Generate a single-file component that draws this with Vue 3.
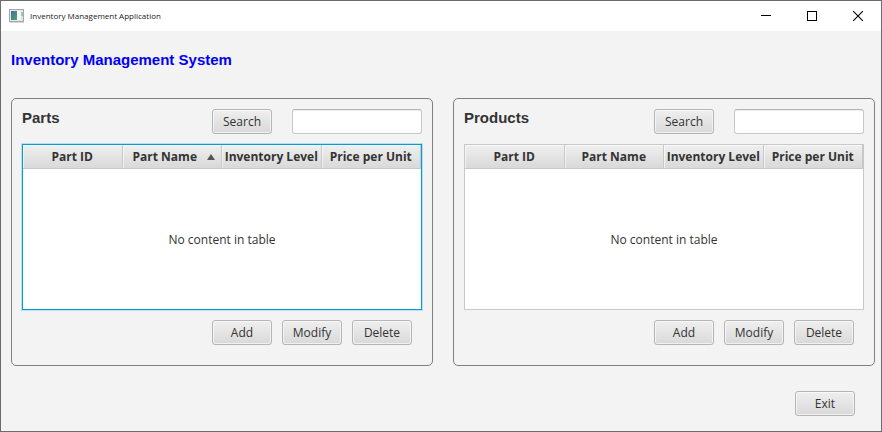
<script setup>
import { ref } from 'vue'

const columns = ['Part ID', 'Part Name', 'Inventory Level', 'Price per Unit']
const panels = ref([
  { id: 'parts', title: 'Parts', focused: true, sorted: 'Part Name', query: '' },
  { id: 'products', title: 'Products', focused: false, sorted: null, query: '' },
])
</script>

<template>
  <div class="window">
    <header class="titlebar">
      <svg class="app-icon" width="16" height="14" viewBox="0 0 16 14" aria-hidden="true">
        <defs>
          <linearGradient id="pane" x1="0" y1="0" x2="1" y2="1">
            <stop offset="0" stop-color="#3f6fa0" />
            <stop offset="1" stop-color="#4aa567" />
          </linearGradient>
        </defs>
        <rect x="0.5" y="0.5" width="14" height="12" fill="#e4e8ec" stroke="#a4a8ad" />
        <path d="M1 13.5H15" stroke="#d3d5d7" />
        <rect x="2" y="2" width="6" height="9" fill="url(#pane)" />
        <rect x="8" y="2" width="4" height="9" fill="#f6f8f8" />
        <rect x="12" y="3" width="2" height="4" fill="#9fc4b4" />
        <rect x="12" y="7" width="2" height="4" fill="#d8e3dc" />
      </svg>
      <span class="caption">Inventory Management Application</span>
      <div class="window-controls">
        <button type="button" aria-label="Minimize">
          <svg width="10" height="10" viewBox="0 0 10 10"><path d="M0 4.5H10" stroke="#000" /></svg>
        </button>
        <button type="button" aria-label="Maximize">
          <svg width="10" height="10" viewBox="0 0 10 10"><rect x="0.5" y="0.5" width="9" height="9" fill="none" stroke="#000" /></svg>
        </button>
        <button type="button" aria-label="Close">
          <svg width="10" height="10" viewBox="0 0 10 10"><path d="M0 0L10 10M10 0L0 10" stroke="#000" stroke-width="1.1" /></svg>
        </button>
      </div>
    </header>

    <main class="content">
      <h1>Inventory Management System</h1>

      <div class="panels">
        <section v-for="panel in panels" :key="panel.id" class="panel">
          <form class="search" @submit.prevent>
            <h2>{{ panel.title }}</h2>
            <button type="submit" class="btn">Search</button>
            <input v-model="panel.query" type="text" class="field" :aria-label="'Search ' + panel.title" />
          </form>

          <table class="grid" :class="{ focused: panel.focused }">
            <thead>
              <tr>
                <th v-for="column in columns" :key="column" scope="col">
                  <div class="heading">
                    <span class="label">{{ column }}</span>
                    <span v-if="panel.sorted === column" class="sort">
                      <svg width="8" height="6" viewBox="0 0 8 6" aria-hidden="true"><path d="M4 0L8 6H0Z" fill="#555" /></svg>
                    </span>
                  </div>
                </th>
              </tr>
            </thead>
            <tbody>
              <tr>
                <td :colspan="columns.length">No content in table</td>
              </tr>
            </tbody>
          </table>

          <div class="actions">
            <button type="button" class="btn">Add</button>
            <button type="button" class="btn">Modify</button>
            <button type="button" class="btn">Delete</button>
          </div>
        </section>
      </div>

      <footer class="footer">
        <button type="button" class="btn">Exit</button>
      </footer>
    </main>
  </div>
</template>

<style>
body {
  background: #f3f3f3;
}
</style>

<style scoped>
.window,
.window * {
  box-sizing: border-box;
}

.window {
  display: flex;
  flex-direction: column;
  min-height: 100vh;
  border: 1px solid #6e6b6c;
  background: #f3f3f3;
  color: #333;
  font-family: "Open Sans", "Noto Sans", sans-serif;
  font-size: 12px;
  line-height: 16px;
}

.titlebar {
  display: flex;
  align-items: center;
  height: 30px;
  padding-left: 8px;
  background: #fff;
}

.caption {
  margin-left: 5px;
  color: #222;
  font-size: 8px;
}

.window-controls {
  display: flex;
  align-self: stretch;
  margin-left: auto;
}

.window-controls button {
  display: flex;
  align-items: center;
  justify-content: center;
  width: 46px;
  padding: 0;
  border: 0;
  background: none;
}

.content {
  padding: 20px 6px 15px 10px;
}

h1,
h2 {
  margin: 0;
  font-family: "Liberation Sans", Arial, sans-serif;
  font-weight: bold;
  line-height: 18px;
}

h1 {
  color: #0000f5;
  font-size: 15px;
}

h2 {
  flex: 1;
  font-size: 15px;
}

.panels {
  display: grid;
  grid-template-columns: 1fr 1fr;
  gap: 20px;
  margin-top: 29px;
}

.panel {
  padding: 10px 10px 20px;
  border: 1px solid #808080;
  border-radius: 5px;
}

.search {
  display: flex;
  align-items: flex-start;
}

.btn {
  width: 60px;
  height: 25px;
  padding: 0;
  border: 1px solid #b5b5b5;
  border-radius: 3px;
  background: linear-gradient(#efefef, #d9d9d9);
  box-shadow: inset 0 0 0 1px rgba(255, 255, 255, 0.6);
  color: #333;
  font: inherit;
}

.field {
  width: 130px;
  height: 25px;
  margin-left: 20px;
  padding: 0 7px;
  border: 1px solid #c8c8c8;
  border-top-color: #b5b5b5;
  border-radius: 3px;
  background: #fff;
  box-shadow: inset 0 1px 1px #eee;
  color: #333;
  font: inherit;
}

.grid {
  width: 100%;
  height: 166px;
  margin-top: 10px;
  border: 1px solid #c8c8c8;
  border-spacing: 0;
  table-layout: fixed;
  background: #fff;
}

.grid.focused {
  border-color: #039ed3;
  box-shadow: 0 0 0 1px #b9e0ee;
}

th {
  height: 24px;
  padding: 0;
  border-right: 1px solid #c8c8c8;
  border-bottom: 1px solid #c8c8c8;
  background: linear-gradient(#efefef, #d9d9d9);
  box-shadow: inset 1px 1px 0 rgba(255, 255, 255, 0.6);
}

.heading {
  display: flex;
  align-items: center;
}

.label {
  flex: 1;
  text-align: center;
  white-space: nowrap;
}

.sort {
  display: flex;
  width: 14px;
}

td {
  padding: 2px 0 0;
  text-align: center;
}

.actions {
  display: flex;
  justify-content: flex-end;
  gap: 10px;
  margin-top: 10px;
  padding-right: 10px;
}

.footer {
  display: flex;
  justify-content: flex-end;
  margin-top: 25px;
  padding-right: 20px;
}
</style>
